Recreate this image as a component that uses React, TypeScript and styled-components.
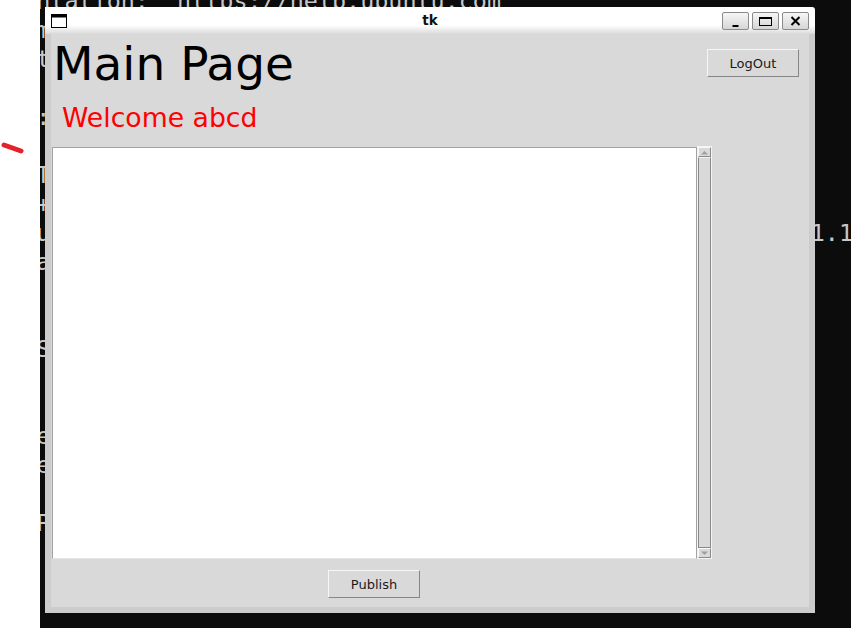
import React from "react";
import styled, { createGlobalStyle } from "styled-components";

const GlobalStyle = createGlobalStyle`
  html, body { margin: 0; padding: 0; background: #ffffff; }
  body { font-family: "DejaVu Sans", "Liberation Sans", sans-serif; }
`;

const Screen = styled.div`
  position: relative;
  width: 851px;
  height: 628px;
  display: flex;
  overflow: hidden;
  background: #ffffff;
`;

const Gutter = styled.div`
  width: 40px;
  flex: none;
  box-sizing: border-box;
  padding: 142px 0 0 1px;
  svg { display: block; }
`;

const Terminal = styled.div`
  flex: 1;
  background: #0c0c0c;
  overflow: hidden;
`;

const TermText = styled.pre`
  margin: -13px 0 0 -130.5px;
  font-family: "DejaVu Sans Mono", "Liberation Mono", monospace;
  font-size: 23.4px;
  line-height: 29px;
  color: #c8c8c8;
  white-space: pre;
`;

const Window = styled.div`
  position: absolute;
  left: 45px;
  top: 7px;
  width: 770px;
  height: 606px;
  display: flex;
  flex-direction: column;
  border-radius: 0 3px 0 0;
  overflow: hidden;
`;

const TitleBar = styled.div`
  height: 27px;
  flex: none;
  display: grid;
  grid-template-columns: 1fr auto 1fr;
  align-items: start;
  background: linear-gradient(to bottom, #ffffff 0%, #ffffff 68%, #dadada 100%);
`;

const TitleIcon = styled.svg`
  display: block;
  margin: 7px 0 0 6px;
`;

const TitleText = styled.div`
  margin-top: 5px;
  font-family: "DejaVu Sans", sans-serif;
  font-weight: bold;
  font-size: 13.5px;
  color: #111111;
`;

const WinButtons = styled.div`
  justify-self: end;
  display: flex;
  gap: 3px;
  margin: 5px 6px 0 0;
`;

const WinButton = styled.div`
  width: 27px;
  height: 18px;
  box-sizing: border-box;
  border: 1px solid #8a8a8a;
  border-radius: 2px;
  background: linear-gradient(to bottom, #f6f6f6, #d6d6d6);
  display: flex;
  align-items: center;
  justify-content: center;
  svg { display: block; }
`;

const Frame = styled.div`
  flex: 1;
  display: flex;
  flex-direction: column;
  border: 6px solid #cccccc;
  border-top: 0;
  background: #d9d9d9;
`;

const Header = styled.div`
  display: flex;
  justify-content: space-between;
  align-items: flex-start;
  margin-top: 2px;
`;

const PageTitle = styled.h1`
  margin: 0 0 0 2px;
  font-family: "DejaVu Sans", sans-serif;
  font-weight: normal;
  font-size: 47px;
  line-height: normal;
  color: #000000;
`;

const TkButton = styled.button<{ $mt?: number; $mr?: number }>`
  width: 92px;
  height: 28px;
  box-sizing: border-box;
  margin: ${(p) => p.$mt ?? 0}px ${(p) => p.$mr ?? 0}px 0 0;
  padding: 0;
  background: #d9d9d9;
  border: 1px solid;
  border-color: #f6f6f6 #868686 #868686 #f6f6f6;
  font-family: "DejaVu Sans", sans-serif;
  font-size: 13px;
  color: #1a1a1a;
`;

const Welcome = styled.div`
  margin: 12px 0 0 11px;
  font-family: "DejaVu Sans", sans-serif;
  font-size: 26.7px;
  line-height: 30px;
  color: #ff0000;
`;

const EditorRow = styled.div`
  display: flex;
  margin: 14px 0 0 1px;
`;

const Editor = styled.div`
  width: 645px;
  height: 412px;
  box-sizing: border-box;
  background: #ffffff;
  border: 1px solid;
  border-color: #a2a2a2 #a2a2a2 #e4e4e4 #a2a2a2;
`;

const Scrollbar = styled.div`
  width: 15px;
  height: 413px;
  margin-top: -1px;
  box-sizing: border-box;
  display: flex;
  flex-direction: column;
  border: 1px solid #f4f4f4;
  background: #d9d9d9;
`;

const ArrowButton = styled.div`
  height: 10px;
  flex: none;
  box-sizing: border-box;
  border: 1px solid;
  border-color: #fafafa #8a8a8a #8a8a8a #fafafa;
  display: flex;
  align-items: center;
  justify-content: center;
  svg { display: block; }
`;

const Slider = styled.div`
  flex: 1;
  box-sizing: border-box;
  border: 1px solid;
  border-color: #f2f2f2 #8a8a8a #8a8a8a #8a8a8a;
  background: #d9d9d9;
`;

const PublishRow = styled.div`
  width: 646px;
  display: flex;
  justify-content: center;
  margin-top: 11px;
`;

const termLines = [
  " * Documentation:  https://help.ubuntu.com",
  " * Management:     https://landscape.canonical.com",
  " * Support:        https://ubuntu.com/advantage",
  "",
  "  Load av: 0.08, 0.03, 0.01",
  "",
  "  Login  Tue Jan 10 09:12",
  "  Diff   +12 lines",
  " eth0 is up                                        addr 192.168.1.1",
  "  inet   addr 192.168.1.1",
  "",
  "",
  "  python Server started",
  "",
  "",
  "  connected to server",
  "  Completed login",
  "",
  " Opening Page",
];

export default function App() {
  return (
    <>
      <GlobalStyle />
      <Screen>
        <Gutter>
          <svg width="26" height="14" viewBox="0 0 26 14">
            <line x1="3" y1="3" x2="20" y2="9" stroke="#e3222b" strokeWidth="5" strokeLinecap="round" />
          </svg>
        </Gutter>
        <Terminal>
          <TermText>{termLines.join("\n")}</TermText>
        </Terminal>
        <Window>
          <TitleBar>
            <TitleIcon width="16" height="14" viewBox="0 0 16 14">
              <rect x="0.5" y="0.5" width="15" height="13" fill="#ffffff" stroke="#000" strokeWidth="1" />
              <rect x="0" y="0" width="16" height="3.5" fill="#000" />
            </TitleIcon>
            <TitleText>tk</TitleText>
            <WinButtons>
              <WinButton>
                <svg width="25" height="16" viewBox="0 0 25 16">
                  <rect x="9.5" y="12" width="6" height="2" fill="#000" />
                </svg>
              </WinButton>
              <WinButton>
                <svg width="25" height="16" viewBox="0 0 25 16">
                  <rect x="6.5" y="4.5" width="12" height="8" fill="none" stroke="#000" strokeWidth="1" />
                  <rect x="6" y="4" width="13" height="2" fill="#000" />
                </svg>
              </WinButton>
              <WinButton>
                <svg width="25" height="16" viewBox="0 0 25 16">
                  <path d="M8.5 4 L16.5 12 M16.5 4 L8.5 12" stroke="#000" strokeWidth="2" fill="none" />
                </svg>
              </WinButton>
            </WinButtons>
          </TitleBar>
          <Frame>
            <Header>
              <PageTitle>Main Page</PageTitle>
              <TkButton $mt={13} $mr={10}>LogOut</TkButton>
            </Header>
            <Welcome>Welcome abcd</Welcome>
            <EditorRow>
              <Editor />
              <Scrollbar>
                <ArrowButton>
                  <svg width="9" height="5" viewBox="0 0 9 5">
                    <path d="M1 4.5 L4.5 1 L8 4.5 Z" fill="#a0a0a0" />
                  </svg>
                </ArrowButton>
                <Slider />
                <ArrowButton>
                  <svg width="9" height="5" viewBox="0 0 9 5">
                    <path d="M1 0.5 L4.5 4 L8 0.5 Z" fill="#a0a0a0" />
                  </svg>
                </ArrowButton>
              </Scrollbar>
            </EditorRow>
            <PublishRow>
              <TkButton>Publish</TkButton>
            </PublishRow>
          </Frame>
        </Window>
      </Screen>
    </>
  );
}
